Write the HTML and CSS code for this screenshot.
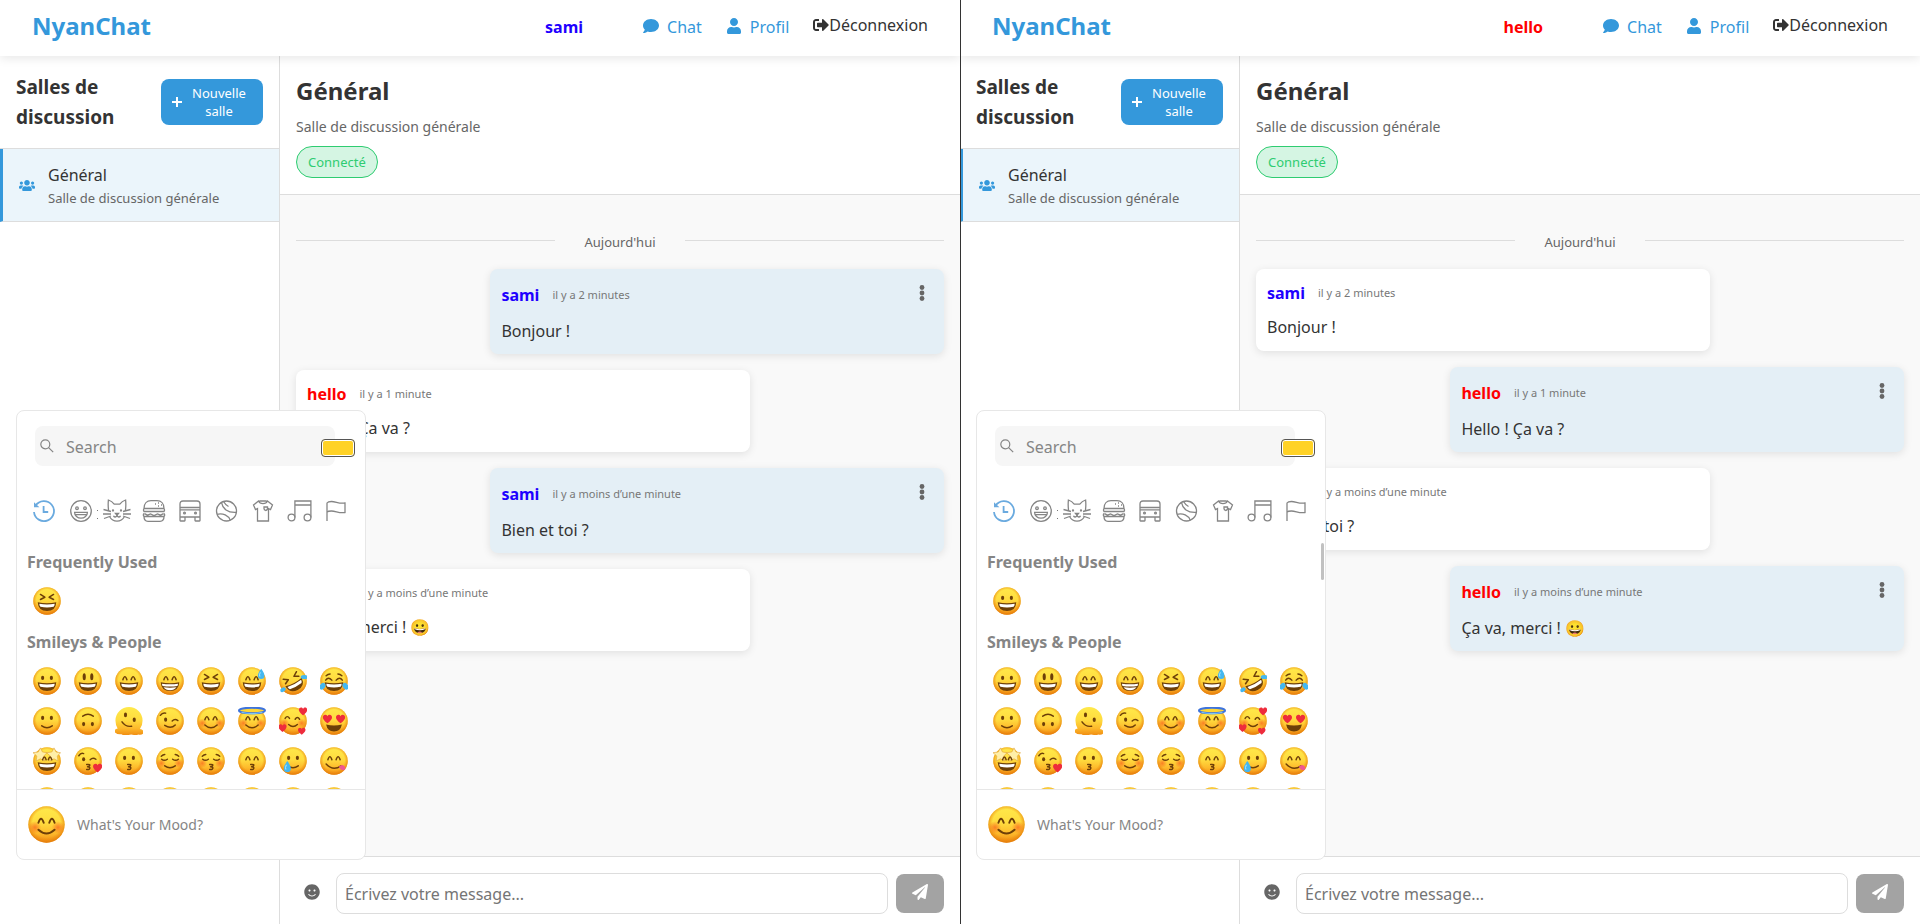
FILE: index.html
```html
<!DOCTYPE html>
<html lang="fr">
<head>
<meta charset="utf-8">
<title>NyanChat</title>
<link rel="stylesheet" href="styles.css">
</head>
<body>
<svg class="sprite" aria-hidden="true">
  <defs>
    <linearGradient id="skin" x1="0" y1="0" x2="0" y2="1">
      <stop offset="0" stop-color="#ffe94a"/><stop offset=".45" stop-color="#ffdc3f"/>
      <stop offset=".75" stop-color="#fdb92b"/><stop offset="1" stop-color="#f08c12"/>
    </linearGradient>
    <radialGradient id="rim" cx=".5" cy=".47" r=".53">
      <stop offset=".72" stop-color="#ee8a10" stop-opacity="0"/><stop offset="1" stop-color="#e27a08" stop-opacity=".85"/>
    </radialGradient>
    <radialGradient id="cheek"><stop offset="0" stop-color="#f9651e" stop-opacity=".75"/><stop offset="1" stop-color="#f9651e" stop-opacity="0"/></radialGradient>
  </defs>
  <!-- Interface icons -->
  <symbol id="i-comment" viewBox="0 0 512 512"><path d="M256 32C114.6 32 0 125.1 0 240c0 49.6 21.4 95 57 130.7C44.5 421.1 2.7 466 2.2 466.5c-2.2 2.3-2.8 5.7-1.5 8.7S4.8 480 8 480c66.3 0 116-31.8 140.6-51.4 32.7 12.3 69 19.4 107.4 19.4 141.4 0 256-93.1 256-208S397.4 32 256 32z"/></symbol>
  <symbol id="i-user" viewBox="0 0 448 512"><path d="M224 256c70.7 0 128-57.3 128-128S294.7 0 224 0 96 57.3 96 128s57.3 128 128 128zm89.6 32h-16.7c-22.2 10.2-46.9 16-72.9 16s-50.6-5.8-72.9-16h-16.7C60.2 288 0 348.2 0 422.4V464c0 26.5 21.5 48 48 48h352c26.5 0 48-21.5 48-48v-41.6c0-74.2-60.2-134.4-134.4-134.4z"/></symbol>
  <symbol id="i-logout" viewBox="0 0 512 512"><path d="M497 273L329 441c-15 15-41 4.5-41-17v-96H152c-13.3 0-24-10.7-24-24v-96c0-13.3 10.7-24 24-24h136V88c0-21.4 25.9-32 41-17l168 168c9.3 9.4 9.3 24.6 0 34zM192 436v-40c0-6.6-5.4-12-12-12H96c-17.7 0-32-14.3-32-32V160c0-17.7 14.3-32 32-32h84c6.6 0 12-5.4 12-12V76c0-6.6-5.4-12-12-12H96c-53 0-96 43-96 96v192c0 53 43 96 96 96h84c6.6 0 12-5.4 12-12z"/></symbol>
  <symbol id="i-users" viewBox="0 0 640 512"><path d="M96 224c35.3 0 64-28.7 64-64s-28.7-64-64-64-64 28.7-64 64 28.7 64 64 64zm448 0c35.3 0 64-28.7 64-64s-28.7-64-64-64-64 28.7-64 64 28.7 64 64 64zm32 32h-64c-17.6 0-33.5 7.1-45.1 18.6 40.3 22.1 68.9 62 75.1 109.4h66c17.7 0 32-14.3 32-32v-32c0-35.3-28.7-64-64-64zm-256 0c61.9 0 112-50.1 112-112S381.9 32 320 32 208 82.1 208 144s50.1 112 112 112zm76.8 32h-8.3c-20.8 10-43.9 16-68.5 16s-47.6-6-68.5-16h-8.3C179.6 288 128 339.6 128 403.2V432c0 26.5 21.5 48 48 48h288c26.5 0 48-21.5 48-48v-28.8c0-63.6-51.6-115.2-115.2-115.2zm-223.7-13.4C161.5 263.1 145.6 256 128 256H64c-35.3 0-64 28.7-64 64v32c0 17.7 14.3 32 32 32h65.9c6.3-47.4 34.9-87.3 75.2-109.4z"/></symbol>
  <symbol id="i-plus" viewBox="0 0 10 12"><path d="M4 1h2v4h4v2H6v4H4V7H0V5h4z"/></symbol>
  <symbol id="i-dots" viewBox="0 0 6 16"><circle cx="3" cy="2.500" r="2.400"/><circle cx="3" cy="8" r="2.400"/><circle cx="3" cy="13.500" r="2.400"/></symbol>
  <symbol id="i-plane" viewBox="0 0 512 512"><path d="M476 3.2L12.5 270.6c-18.1 10.4-15.8 35.6 2.2 43.2L121 358.4l287.3-253.2c5.5-4.9 13.3 2.6 8.6 8.3L176 407v80.5c0 23.6 28.5 32.9 42.5 15.8L282 426l124.6 52.2c14.2 6 30.4-2.9 33-18.2l72-432C515 7.8 493.3-6.8 476 3.2z"/></symbol>
  <symbol id="i-smile" viewBox="0 0 496 512"><path d="M248 8C111 8 0 119 0 256s111 248 248 248 248-111 248-248S385 8 248 8zm80 168c17.7 0 32 14.3 32 32s-14.3 32-32 32-32-14.3-32-32 14.3-32 32-32zm-160 0c17.7 0 32 14.3 32 32s-14.3 32-32 32-32-14.3-32-32 14.3-32 32-32zm194.8 170.2C334.3 380.4 292.5 400 248 400s-86.3-19.6-114.8-53.8c-13.6-16.3 11-36.7 24.6-20.5 22.4 26.9 55.2 42.2 90.2 42.2s67.8-15.4 90.2-42.2c13.4-16.2 38.1 4.2 24.6 20.5z"/></symbol>
  <symbol id="i-search" viewBox="0 0 14 14"><circle cx="5.300" cy="5.300" r="4.500"/><path d="M8.600 8.600l4.600 4.600"/></symbol>
  <!-- Category icons -->
  <symbol id="c-recent" viewBox="0 0 28 24"><path d="M5.600 6.600A10 10 0 1 1 4 13"/><path d="M4 3.200v5h5.400z" fill="currentColor" stroke="none"/><path d="M13.600 7v6h4.600"/></symbol>
  <symbol id="c-smile" viewBox="0 0 28 24"><circle cx="14" cy="12" r="10.300"/><circle cx="10" cy="9.200" r="1.300"/><circle cx="18" cy="9.200" r="1.300"/><path d="M7.600 13.400h12.800a6.400 5.800 0 0 1-12.800 0zM8.600 15.600h10.800"/></symbol>
  <symbol id="c-cat" viewBox="0 0 28 24"><path d="M5.600 11.500c-.6-4-.5-7.600-.2-10.500 2.400.8 4.400 2.300 5.800 4.200h5.600c1.400-1.900 3.400-3.400 5.800-4.200.3 2.900.4 6.500-.2 10.500M6.500 17.500c3.500 6.200 11.500 6.200 15 0M12.500 14.500h3l-1.500 1.700zM14 16.200c-.5 2.300-3 2.300-3.500.6M14 16.200c.5 2.300 3 2.300 3.500.6M.5 10.500l7.500 2M0 15h8M1 19.500l7-2.500M27.500 10.500l-7.500 2M28 15h-8M27 19.500L20 17"/><circle cx="10" cy="11.500" r=".5"/><circle cx="18" cy="11.500" r=".5"/></symbol>
  <symbol id="c-food" viewBox="0 0 28 24"><path d="M4 9.500C4 4.500 7 1.700 11 1.700h6c4 0 7 2.800 7 7.800zM4 9.500q-1 1.500 0 3h20q1-1.500 0-3M4.500 14.700l3 1.500 3-1.200 3.500 1.500 3.500-1.500 3 1.200 3-1.500M4 14.300q-1.300 1.700 0 3.200h20q1.300-1.500 0-3.200M4 17.500c0 3 1.500 4.800 4 4.800h12c2.500 0 4-1.800 4-4.800"/><path d="M15 5h1M18 4h1M18 7h1M21 6h1"/></symbol>
  <symbol id="c-travel" viewBox="0 0 28 24"><path d="M4 8.500V5q0-3 3-3h14q3 0 3 3v3.500zM4 8.500V18h20V8.500M4 10.800h20M4 18v3.500q0 .5.500.5h4q.5 0 .5-.5V18M24 18v3.500q0 .5-.5.500h-4q-.5 0-.5-.5V18"/><circle cx="8.500" cy="14" r=".9"/><circle cx="19.500" cy="14" r=".9"/></symbol>
  <symbol id="c-sport" viewBox="0 0 28 24"><circle cx="13.500" cy="12" r="10"/><path d="M8.500 3.500c1 6 6 10.500 15 9.800M4 15.300c6-1.300 11.500 1 13.300 6.200M10.500 2.500c1.500 2.500 3 4 5 5"/></symbol>
  <symbol id="c-object" viewBox="0 0 28 24"><path d="M9.500 2L4.500 6l2 4.500L8.500 9.500V22h11V9.500l2 1 2-4.500L18.500 2c-1.500 3.500-7.500 3.500-9 0zM10.300 2h7.400M15 8h3.500v1.500q0 1.500-1.800 2-1.700-.5-1.700-2z"/></symbol>
  <symbol id="c-symbol" viewBox="0 0 28 24"><circle cx="5.500" cy="18.500" r="3.400"/><circle cx="21.500" cy="18.500" r="3.400"/><path d="M8.900 18.500V2h16v16.500M8.900 6h16"/></symbol>
  <symbol id="c-flag" viewBox="0 0 28 24"><path d="M5 22V4q1-1.500 4.500-1.500c4.500 0 7.500 2.500 13.500 1.500v9.500c-6 1-9-1.500-13.500-1.500Q6 12 5 13.200"/></symbol>
  <!-- Emoji parts -->
  <symbol id="p-face" viewBox="0 0 32 32"><circle cx="16" cy="16" r="15.700" fill="url(#skin)"/><circle cx="16" cy="16" r="15.700" fill="url(#rim)"/></symbol>
  <symbol id="p-mouth" viewBox="0 0 32 32"><path d="M5.400 17.300q10.600 2.400 21.200 0Q26 27.500 16 27.500T5.400 17.300z" fill="#6d3f08"/><path d="M7.200 19.200q8.800 1.600 17.600 0-.2 2.600-1.300 3.400-7.500 1.400-15 0-1.100-.8-1.300-3.400z" fill="#fff"/></symbol>
  <symbol id="p-happy" viewBox="0 0 32 32"><path d="M9 14.500q2.300-7 4.600 0M18.400 14.500q2.300-7 4.600 0" class="ln"/></symbol>
  <symbol id="p-closed" viewBox="0 0 32 32"><path d="M6.500 14q3 2.500 6.500 0M19 14q3.500 2.500 6.500 0M6 10.500q2-2 4-2M26 10.500q-2-2-4-2" class="ln"/></symbol>
  <symbol id="p-dots" viewBox="0 0 32 32"><ellipse cx="11" cy="12.500" rx="1.800" ry="2.400" fill="#6d3f08"/><ellipse cx="21" cy="12.500" rx="1.800" ry="2.400" fill="#6d3f08"/></symbol>
  <symbol id="p-smile" viewBox="0 0 32 32"><path d="M10 21.500q6 4.500 12 0" class="ln"/></symbol>
  <symbol id="p-kiss" viewBox="0 0 32 32"><path d="M14.500 20q5-.5 3 1.800-.8.800-2 .8 4 .4 2 2.600-1 .8-3 .6" class="ln"/></symbol>
  <symbol id="p-cheeks" viewBox="0 0 32 32"><circle cx="6" cy="18.500" r="5.500" fill="url(#cheek)"/><circle cx="26" cy="18.500" r="5.500" fill="url(#cheek)"/></symbol>
  <symbol id="p-heart" viewBox="0 0 12 12"><path d="M6 11.500C2 8.500.3 6.300.3 3.900.3.500 4.600-.4 6 2.700 7.400-.4 11.700.5 11.700 3.900c0 2.400-1.700 4.600-5.700 7.600z" fill="#ee2c3c"/></symbol>
  <symbol id="p-drop" viewBox="0 0 8 12"><path d="M4 0q3.800 5 3.800 8A3.800 3.800 0 0 1 .2 8Q.2 5 4 0z" fill="#43b7f0"/><path d="M3 4q-1.500 3-.5 5" stroke="#bdeaff" fill="none"/></symbol>
  <!-- Emoji -->
  <symbol id="e0" viewBox="0 0 32 32"><use href="#p-face"/></symbol>
  <symbol id="e1" viewBox="0 0 32 32"><use href="#p-face"/><use href="#p-dots"/><use href="#p-mouth"/></symbol>
  <symbol id="e2" viewBox="0 0 32 32"><use href="#p-face"/><ellipse cx="11.700" cy="11" rx="1.800" ry="4" fill="#6d3f08"/><ellipse cx="20.300" cy="11" rx="1.800" ry="4" fill="#6d3f08"/><use href="#p-mouth"/></symbol>
  <symbol id="e3" viewBox="0 0 32 32"><use href="#p-face"/><use href="#p-happy"/><use href="#p-mouth"/></symbol>
  <symbol id="e4" viewBox="0 0 32 32"><use href="#p-face"/><use href="#p-happy"/><path d="M5.400 17.300q10.600 2.400 21.200 0Q26 27.500 16 27.500T5.400 17.300z" fill="#6d3f08"/><path d="M6.800 19q9.200 1.600 18.400 0-.3 2-.8 2.800-8.400 1.200-16.800 0-.6-1-.8-2.800zM8.600 23.200q7.400 1 14.800 0-2.400 3.400-7.400 3.400t-7.400-3.400z" fill="#fff"/></symbol>
  <symbol id="e5" viewBox="0 0 32 32"><use href="#p-face"/><path d="M8.500 8.500l5 3.200-5 2.600M23.500 8.500l-5 3.200 5 2.600" class="ln"/><use href="#p-mouth"/></symbol>
  <symbol id="e6" viewBox="0 0 32 32"><use href="#e3"/><use href="#p-drop" x="22.500" y="1.500" width="8" height="13"/></symbol>
  <symbol id="e7" viewBox="0 0 32 32"><use href="#p-face"/><g transform="rotate(-28 16 16)"><path d="M7 9l5 3.200-5 2.600M24.500 8.500l-5 3.200 5 2.600" class="ln"/><use href="#p-mouth"/></g><ellipse cx="4.500" cy="26" rx="3.300" ry="2.300" transform="rotate(-30 4.500 26)" fill="#43b7f0"/><ellipse cx="29" cy="11.500" rx="4.200" ry="2.300" fill="#43b7f0"/></symbol>
  <symbol id="e8" viewBox="0 0 32 32"><use href="#p-face"/><path d="M6.500 15q3-4.500 7 0M18.500 15q4-4.500 7 0M7 10q2-2 4.500-2M25 10q-2-2-4.500-2" class="ln"/><use href="#p-mouth"/><ellipse cx="2.800" cy="22" rx="3" ry="4.300" transform="rotate(35 2.800 22)" fill="#43b7f0"/><ellipse cx="29.200" cy="22" rx="3" ry="4.300" transform="rotate(-35 29.200 22)" fill="#43b7f0"/></symbol>
  <symbol id="e9" viewBox="0 0 32 32"><use href="#p-face"/><use href="#p-dots"/><use href="#p-smile"/></symbol>
  <symbol id="e10" viewBox="0 0 32 32"><use href="#p-face"/><g transform="rotate(180 16 16)"><use href="#p-dots"/><use href="#p-smile"/></g></symbol>
  <symbol id="e11" viewBox="0 0 32 32"><path d="M0 29q-2-3 3-4.500-2.500-4-2.500-9a15.500 15.500 0 0 1 31 0q0 6-3 9.500 5 1 4 5-2 2.500-6 1.500-3 1.500-5 .5-3-1-6 0-6 1-8-1-4 1-7.500-2z" fill="url(#skin)"/><ellipse cx="12" cy="9" rx="1.800" ry="2.600" fill="#6d3f08"/><ellipse cx="22" cy="14.500" rx="1.800" ry="2.600" fill="#6d3f08"/><path d="M8 17q4 6 11 5" class="ln"/></symbol>
  <symbol id="e12" viewBox="0 0 32 32"><use href="#p-face"/><ellipse cx="11" cy="14.500" rx="1.800" ry="2.400" fill="#6d3f08"/><path d="M5 9.500Q7.500 6 11 7M18.500 16q3-3 6.500-.5M10 21q7 4.500 12-.5" class="ln"/></symbol>
  <symbol id="e13" viewBox="0 0 32 32"><use href="#p-face"/><use href="#p-cheeks"/><use href="#p-happy"/><path d="M9 20.500q7 6.500 14 0" class="ln"/></symbol>
  <symbol id="e14" viewBox="0 0 32 32"><use href="#e13"/><ellipse cx="16" cy="4" rx="14.800" ry="3.200" fill="#ffd737" stroke="#3e74dc" stroke-width="2.400"/><path d="M4 6q12 3 24 0" fill="none" stroke="#7fc4f5" stroke-width="1.400"/></symbol>
  <symbol id="e15" viewBox="0 0 32 32"><use href="#p-face"/><use href="#p-cheeks"/><path d="M7 13q2.500-4 5 0M18.500 14q2.500-4 5 0M11 20q5 4.500 10 0" class="ln"/><use href="#p-heart" x="22" y="0" width="11" height="10"/><use href="#p-heart" x="-1" y="19" width="10" height="10"/><use href="#p-heart" x="21" y="23" width="10" height="9"/></symbol>
  <symbol id="e16" viewBox="0 0 32 32"><use href="#p-face"/><path d="M7 20q9 2.500 18 0-1.500 8-9 8t-9-8z" fill="#6d3f08"/><use href="#p-heart" x="2.500" y="8" width="12" height="11"/><use href="#p-heart" x="17.500" y="8" width="12" height="11"/></symbol>
  <symbol id="e17" viewBox="0 0 32 32"><use href="#p-face"/><use href="#p-mouth"/><path id="star" d="M8.500 1l2.300 4.700 5.200.8-3.700 3.900.8 5.600-4.600-2.500L3.600 16l.8-5.600L0 6.500l6-.8z" fill="#ffefa8" stroke="#e0a53c" stroke-width=".7"/><use href="#star" x="15.500"/><path d="M11 14.500q2-6 4 0M17.500 14.500q2-6 4 0" class="ln"/></symbol>
  <symbol id="e18" viewBox="0 0 32 32"><use href="#p-face"/><ellipse cx="11" cy="14" rx="1.800" ry="2.400" fill="#6d3f08"/><path d="M5.500 10Q8 6 11 7.500M18.500 14.500q3-3 6.500-.5" class="ln"/><use href="#p-kiss"/><use href="#p-heart" x="21.500" y="18.500" width="11" height="11"/></symbol>
  <symbol id="e19" viewBox="0 0 32 32"><use href="#p-face"/><use href="#p-dots"/><use href="#p-kiss"/></symbol>
  <symbol id="e20" viewBox="0 0 32 32"><use href="#p-face"/><use href="#p-cheeks"/><use href="#p-closed"/><use href="#p-smile"/></symbol>
  <symbol id="e21" viewBox="0 0 32 32"><use href="#p-face"/><use href="#p-cheeks"/><use href="#p-closed"/><use href="#p-kiss"/></symbol>
  <symbol id="e22" viewBox="0 0 32 32"><use href="#p-face"/><use href="#p-happy"/><use href="#p-kiss"/></symbol>
  <symbol id="e23" viewBox="0 0 32 32"><use href="#e9"/><use href="#p-drop" x="5" y="16" width="9" height="13"/></symbol>
  <symbol id="e24" viewBox="0 0 32 32"><use href="#p-face"/><use href="#p-happy"/><path d="M7 19.500q8 8.500 17 2" class="ln"/><path d="M21.500 22.500q4-4 7 0 1.500 4-2 4-3 0-5-4z" fill="#f0588f"/></symbol>
</svg>

<div class="panes">
  <section class="pane">
    <header class="topbar">
      <a class="brand" href="#">NyanChat</a>
      <nav class="nav">
        <span class="me blue">sami</span>
        <a class="nav-link" href="#"><svg class="ico16"><use href="#i-comment"/></svg>Chat</a>
        <a class="nav-link" href="#"><svg class="ico16"><use href="#i-user"/></svg>Profil</a>
        <button class="logout" type="button"><svg class="ico16"><use href="#i-logout"/></svg>Déconnexion</button>
      </nav>
    </header>
    <div class="workspace">
      <aside class="sidebar">
        <div class="side-head">
          <h2>Salles de discussion</h2>
          <button class="new-room" type="button"><svg class="ico-plus"><use href="#i-plus"/></svg><span>Nouvelle salle</span></button>
        </div>
        <a class="room" href="#"><svg class="ico-users"><use href="#i-users"/></svg><span class="room-text"><span class="room-name">Général</span><span class="room-desc">Salle de discussion générale</span></span></a>
      </aside>
      <main class="chat">
        <div class="chat-head"><h1>Général</h1><p>Salle de discussion générale</p><span class="status">Connecté</span></div>
        <div class="messages">
          <div class="day"><span>Aujourd'hui</span></div>
          <article class="msg own"><div class="msg-head"><strong class="blue">sami</strong><time>il y a 2 minutes</time><button class="more" type="button" aria-label="Options"><svg><use href="#i-dots"/></svg></button></div><p>Bonjour !</p></article>
          <article class="msg"><div class="msg-head"><strong class="red">hello</strong><time>il y a 1 minute</time></div><p>Hello ! Ça va ?</p></article>
          <article class="msg own"><div class="msg-head"><strong class="blue">sami</strong><time>il y a moins d’une minute</time><button class="more" type="button" aria-label="Options"><svg><use href="#i-dots"/></svg></button></div><p>Bien et toi ?</p></article>
          <article class="msg"><div class="msg-head"><strong class="red">hello</strong><time>il y a moins d’une minute</time></div><p>Ça va, merci ! 😀</p></article>
        </div>
        <form class="composer">
          <button class="emoji-toggle" type="button" aria-label="Emoji"><svg class="ico16"><use href="#i-smile"/></svg></button>
          <input type="text" placeholder="Écrivez votre message..." aria-label="Message">
          <button class="send" type="button" aria-label="Envoyer"><svg class="ico16"><use href="#i-plane"/></svg></button>
        </form>
      </main>
    </div>
    <div class="picker">
      <div class="picker-top">
        <label class="search"><svg class="ico-search"><use href="#i-search"/></svg><input type="text" placeholder="Search" aria-label="Search"></label>
        <button class="tone" type="button" aria-label="Skin tone"></button>
      </div>
      <div class="cats">
        <button type="button" class="active" aria-label="Frequently Used"><svg><use href="#c-recent"/></svg></button>
        <button type="button" class="smile-cat" aria-label="Smileys"><svg><use href="#c-smile"/></svg></button>
        <button type="button" aria-label="Animals"><svg><use href="#c-cat"/></svg></button>
        <button type="button" aria-label="Food"><svg><use href="#c-food"/></svg></button>
        <button type="button" aria-label="Travel"><svg><use href="#c-travel"/></svg></button>
        <button type="button" aria-label="Activities"><svg><use href="#c-sport"/></svg></button>
        <button type="button" aria-label="Objects"><svg><use href="#c-object"/></svg></button>
        <button type="button" aria-label="Symbols"><svg><use href="#c-symbol"/></svg></button>
        <button type="button" aria-label="Flags"><svg><use href="#c-flag"/></svg></button>
      </div>
      <div class="picker-body">
        <h3>Frequently Used</h3>
        <div class="grid"><button type="button"><svg><use href="#e5"/></svg></button></div>
        <h3>Smileys &amp; People</h3>
        <div class="grid">
          <button type="button"><svg><use href="#e1"/></svg></button><button type="button"><svg><use href="#e2"/></svg></button><button type="button"><svg><use href="#e3"/></svg></button><button type="button"><svg><use href="#e4"/></svg></button><button type="button"><svg><use href="#e5"/></svg></button><button type="button"><svg><use href="#e6"/></svg></button><button type="button"><svg><use href="#e7"/></svg></button><button type="button"><svg><use href="#e8"/></svg></button>
          <button type="button"><svg><use href="#e9"/></svg></button><button type="button"><svg><use href="#e10"/></svg></button><button type="button"><svg><use href="#e11"/></svg></button><button type="button"><svg><use href="#e12"/></svg></button><button type="button"><svg><use href="#e13"/></svg></button><button type="button"><svg><use href="#e14"/></svg></button><button type="button"><svg><use href="#e15"/></svg></button><button type="button"><svg><use href="#e16"/></svg></button>
          <button type="button"><svg><use href="#e17"/></svg></button><button type="button"><svg><use href="#e18"/></svg></button><button type="button"><svg><use href="#e19"/></svg></button><button type="button"><svg><use href="#e20"/></svg></button><button type="button"><svg><use href="#e21"/></svg></button><button type="button"><svg><use href="#e22"/></svg></button><button type="button"><svg><use href="#e23"/></svg></button><button type="button"><svg><use href="#e24"/></svg></button>
          <button type="button"><svg><use href="#e0"/></svg></button><button type="button"><svg><use href="#e0"/></svg></button><button type="button"><svg><use href="#e0"/></svg></button><button type="button"><svg><use href="#e0"/></svg></button><button type="button"><svg><use href="#e0"/></svg></button><button type="button"><svg><use href="#e0"/></svg></button><button type="button"><svg><use href="#e0"/></svg></button><button type="button"><svg><use href="#e0"/></svg></button>
        </div>
      </div>
      <div class="mood"><svg><use href="#e13"/></svg><span>What's Your Mood?</span></div>
    </div>
  </section>

  <section class="pane second">
    <header class="topbar">
      <a class="brand" href="#">NyanChat</a>
      <nav class="nav">
        <span class="me red">hello</span>
        <a class="nav-link" href="#"><svg class="ico16"><use href="#i-comment"/></svg>Chat</a>
        <a class="nav-link" href="#"><svg class="ico16"><use href="#i-user"/></svg>Profil</a>
        <button class="logout" type="button"><svg class="ico16"><use href="#i-logout"/></svg>Déconnexion</button>
      </nav>
    </header>
    <div class="workspace">
      <aside class="sidebar">
        <div class="side-head">
          <h2>Salles de discussion</h2>
          <button class="new-room" type="button"><svg class="ico-plus"><use href="#i-plus"/></svg><span>Nouvelle salle</span></button>
        </div>
        <a class="room" href="#"><svg class="ico-users"><use href="#i-users"/></svg><span class="room-text"><span class="room-name">Général</span><span class="room-desc">Salle de discussion générale</span></span></a>
      </aside>
      <main class="chat">
        <div class="chat-head"><h1>Général</h1><p>Salle de discussion générale</p><span class="status">Connecté</span></div>
        <div class="messages">
          <div class="day"><span>Aujourd'hui</span></div>
          <article class="msg"><div class="msg-head"><strong class="blue">sami</strong><time>il y a 2 minutes</time></div><p>Bonjour !</p></article>
          <article class="msg own"><div class="msg-head"><strong class="red">hello</strong><time>il y a 1 minute</time><button class="more" type="button" aria-label="Options"><svg><use href="#i-dots"/></svg></button></div><p>Hello ! Ça va ?</p></article>
          <article class="msg"><div class="msg-head"><strong class="blue">sami</strong><time>il y a moins d’une minute</time></div><p>Bien et toi ?</p></article>
          <article class="msg own"><div class="msg-head"><strong class="red">hello</strong><time>il y a moins d’une minute</time><button class="more" type="button" aria-label="Options"><svg><use href="#i-dots"/></svg></button></div><p>Ça va, merci ! 😀</p></article>
        </div>
        <form class="composer">
          <button class="emoji-toggle" type="button" aria-label="Emoji"><svg class="ico16"><use href="#i-smile"/></svg></button>
          <input type="text" placeholder="Écrivez votre message..." aria-label="Message">
          <button class="send" type="button" aria-label="Envoyer"><svg class="ico16"><use href="#i-plane"/></svg></button>
        </form>
      </main>
    </div>
    <div class="picker">
      <div class="picker-top">
        <label class="search"><svg class="ico-search"><use href="#i-search"/></svg><input type="text" placeholder="Search" aria-label="Search"></label>
        <button class="tone" type="button" aria-label="Skin tone"></button>
      </div>
      <div class="cats">
        <button type="button" class="active" aria-label="Frequently Used"><svg><use href="#c-recent"/></svg></button>
        <button type="button" class="smile-cat" aria-label="Smileys"><svg><use href="#c-smile"/></svg></button>
        <button type="button" aria-label="Animals"><svg><use href="#c-cat"/></svg></button>
        <button type="button" aria-label="Food"><svg><use href="#c-food"/></svg></button>
        <button type="button" aria-label="Travel"><svg><use href="#c-travel"/></svg></button>
        <button type="button" aria-label="Activities"><svg><use href="#c-sport"/></svg></button>
        <button type="button" aria-label="Objects"><svg><use href="#c-object"/></svg></button>
        <button type="button" aria-label="Symbols"><svg><use href="#c-symbol"/></svg></button>
        <button type="button" aria-label="Flags"><svg><use href="#c-flag"/></svg></button>
      </div>
      <div class="picker-body scrolling">
        <h3>Frequently Used</h3>
        <div class="grid"><button type="button"><svg><use href="#e1"/></svg></button></div>
        <h3>Smileys &amp; People</h3>
        <div class="grid">
          <button type="button"><svg><use href="#e1"/></svg></button><button type="button"><svg><use href="#e2"/></svg></button><button type="button"><svg><use href="#e3"/></svg></button><button type="button"><svg><use href="#e4"/></svg></button><button type="button"><svg><use href="#e5"/></svg></button><button type="button"><svg><use href="#e6"/></svg></button><button type="button"><svg><use href="#e7"/></svg></button><button type="button"><svg><use href="#e8"/></svg></button>
          <button type="button"><svg><use href="#e9"/></svg></button><button type="button"><svg><use href="#e10"/></svg></button><button type="button"><svg><use href="#e11"/></svg></button><button type="button"><svg><use href="#e12"/></svg></button><button type="button"><svg><use href="#e13"/></svg></button><button type="button"><svg><use href="#e14"/></svg></button><button type="button"><svg><use href="#e15"/></svg></button><button type="button"><svg><use href="#e16"/></svg></button>
          <button type="button"><svg><use href="#e17"/></svg></button><button type="button"><svg><use href="#e18"/></svg></button><button type="button"><svg><use href="#e19"/></svg></button><button type="button"><svg><use href="#e20"/></svg></button><button type="button"><svg><use href="#e21"/></svg></button><button type="button"><svg><use href="#e22"/></svg></button><button type="button"><svg><use href="#e23"/></svg></button><button type="button"><svg><use href="#e24"/></svg></button>
          <button type="button"><svg><use href="#e0"/></svg></button><button type="button"><svg><use href="#e0"/></svg></button><button type="button"><svg><use href="#e0"/></svg></button><button type="button"><svg><use href="#e0"/></svg></button><button type="button"><svg><use href="#e0"/></svg></button><button type="button"><svg><use href="#e0"/></svg></button><button type="button"><svg><use href="#e0"/></svg></button><button type="button"><svg><use href="#e0"/></svg></button>
        </div>
      </div>
      <div class="mood"><svg><use href="#e13"/></svg><span>What's Your Mood?</span></div>
    </div>
  </section>
</div>
</body>
</html>
```
FILE: styles.css
```css
* { box-sizing: border-box; margin: 0; padding: 0; }
body { font-family: "Noto Sans", "Noto Color Emoji", sans-serif; font-size: 16px; color: #333; background: #fff; }
button, input { font: inherit; color: inherit; border: 0; background: none; }
button { cursor: pointer; }
a { color: inherit; text-decoration: none; }
svg { display: block; fill: currentColor; flex: none; overflow: visible; }
.sprite { position: absolute; width: 0; height: 0; }
.ln { fill: none; stroke: #6d3f08; stroke-width: 1.7; stroke-linecap: round; stroke-linejoin: round; }
.blue { color: #1e00ff; }
.red { color: #f00; }
.ico16 { width: 16px; height: 16px; }

.panes { display: grid; grid-template-columns: 1fr 1fr; height: 100vh; overflow: hidden; }
.pane { position: relative; display: flex; flex-direction: column; min-width: 0; min-height: 0; overflow: hidden; }
.second::before { content: ""; position: absolute; z-index: 5; left: 0; top: 0; bottom: 0; width: 1px; background: #333; }

.topbar { position: relative; z-index: 1; display: flex; align-items: center; justify-content: space-between; height: 56px; padding: 0 32px 2px; background: #fff; box-shadow: 0 2px 10px rgba(0, 0, 0, .1); }
.brand { font-size: 24px; line-height: 38px; font-weight: 700; color: #3498db; padding-bottom: 2px; }
.nav { display: flex; align-items: center; gap: 24px; line-height: 26px; }
.me { font-weight: 700; margin-right: 36px; }
.nav-link { display: flex; align-items: center; gap: 8px; color: #3498db; }
.nav-link svg { margin-bottom: 2px; }
.logout { display: flex; align-items: center; line-height: 26px; padding-bottom: 4px; }

.workspace { flex: 1; display: flex; min-height: 0; }
.sidebar { flex: 0 0 280px; border-right: 1px solid #ddd; background: #fff; }
.side-head { display: flex; align-items: center; justify-content: space-between; padding: 16px; border-bottom: 1px solid #ddd; }
.side-head h2 { font-size: 19px; line-height: 30px; width: 110px; }
.new-room { display: flex; align-items: center; justify-content: space-between; width: 102px; padding: 5px 11px; border-radius: 8px; background: #3498db; color: #fff; font-size: 13px; line-height: 18px; }
.new-room span { width: 66px; text-align: center; }
.ico-plus { width: 10px; height: 12px; }
.room { display: flex; align-items: center; gap: 13px; padding: 13px 16px 12px; border-left: 3px solid #3498db; border-bottom: 1px solid #ddd; background: #ebf5fb; }
.ico-users { width: 16px; height: 13px; color: #3498db; }
.room-text { display: flex; flex-direction: column; }
.room-name { line-height: 26px; }
.room-desc { font-size: 13px; line-height: 21px; color: #666; }

.chat { flex: 1; display: flex; flex-direction: column; min-width: 0; }
.chat-head { padding: 16px; border-bottom: 1px solid #ddd; background: #fff; }
.chat-head h1 { font-size: 24px; line-height: 38px; margin-bottom: 5px; }
.chat-head p { font-size: 14px; line-height: 23px; margin-bottom: 8px; color: #666; }
.status { display: block; width: fit-content; padding: 5px 11px; border: 1px solid #2ecc71; border-radius: 16px; background: #d5f5e3; color: #2ecc71; font-size: 13px; line-height: 20px; }
.messages { flex: 1; display: flex; flex-direction: column; gap: 16px; padding: 37px 16px 16px; background: #f9f9f9; overflow: hidden; }
.day { display: flex; align-items: center; gap: 29px; font-size: 13px; line-height: 21px; color: #666; }
.day::before, .day::after { content: ""; flex: 1; height: 1px; margin-bottom: 4px; background: #ddd; }
.msg { width: 70%; padding: 11px; border-radius: 8px; background: #fff; box-shadow: 0 2px 8px rgba(0, 0, 0, .1); }
.msg.own { align-self: flex-end; padding-bottom: 10px; background: #e4eff6; }
.msg-head { display: flex; align-items: center; gap: 13px; min-height: 26px; margin-bottom: 8px; }
.own .msg-head { min-height: 30px; }
.msg-head time { font-size: 11px; line-height: 18px; color: #777; }
.msg p { line-height: 26px; }
.more { align-self: flex-start; margin-left: auto; padding: 5px 8px; color: #666; }
.more svg { width: 6px; height: 16px; }
.composer { display: flex; align-items: center; gap: 8px; padding: 16px 16px 10px; border-top: 1px solid #ddd; background: #fff; }
.emoji-toggle { padding: 8px 8px 11px; color: #666; }
.composer input { flex: 1; min-width: 0; height: 41px; padding: 0 8px; border: 1px solid #ddd; border-radius: 8px; }
.composer input::placeholder { color: #757575; }
.send { width: 48px; height: 39px; padding: 0 16px 3px; border-radius: 8px; background: #a3a3a3; color: #fff; }

.picker { position: absolute; z-index: 3; left: 16px; bottom: 64px; width: 350px; height: 450px; display: flex; flex-direction: column; border: 1px solid #e7e7e7; border-radius: 8px; background: #fff; color: #858585; overflow: hidden; }
.picker-top { position: relative; padding: 15px 30px 0 18px; }
.search { display: flex; align-items: center; gap: 12px; height: 40px; padding: 0 5px; border-radius: 8px; background: #f6f6f6; }
.search input { flex: 1; min-width: 0; height: 40px; padding-top: 2px; outline: 0; }
.search input::placeholder { color: #858585; }
.ico-search { width: 14px; height: 14px; fill: none; stroke: #858585; stroke-width: 1.2; }
.tone { position: absolute; right: 10px; top: 28px; width: 34px; height: 18px; border: 1px solid #555; border-radius: 4px; background: #ffd226; box-shadow: inset 0 0 0 1px #fff; }
.cats { display: flex; justify-content: space-between; padding: 33px 15px 18px 13px; }
.cats button { position: relative; }
.cats svg { width: 28px; height: 24px; fill: none; stroke: currentColor; stroke-width: 1.3; }
.cats .active { color: #6aaadf; }
.cats .active svg { stroke-width: 1.8; }
.smile-cat::after { content: ""; position: absolute; left: 30px; top: 11px; width: 1px; height: 7px; border: solid #777; border-width: 1px 0; }
.picker-body { position: relative; flex: 1; min-height: 0; padding: 0 11px 0 9px; overflow: hidden; }
.scrolling::after { content: ""; position: absolute; right: 1px; top: 2px; width: 3px; height: 37px; border-radius: 2px; background: #c1c1c1; }
.picker-body h3 { padding: 2px 0 0 1px; font-size: 16px; line-height: 38px; }
.grid { display: grid; grid-template-columns: repeat(8, 1fr); }
.grid button { display: grid; place-items: center; height: 40px; }
.grid svg { width: 28px; height: 28px; }
.mood { display: flex; align-items: center; gap: 12px; height: 70px; padding: 0 11px; border-top: 1px solid #e7e7e7; font-size: 14px; }
.mood svg { width: 37px; height: 37px; }
```
